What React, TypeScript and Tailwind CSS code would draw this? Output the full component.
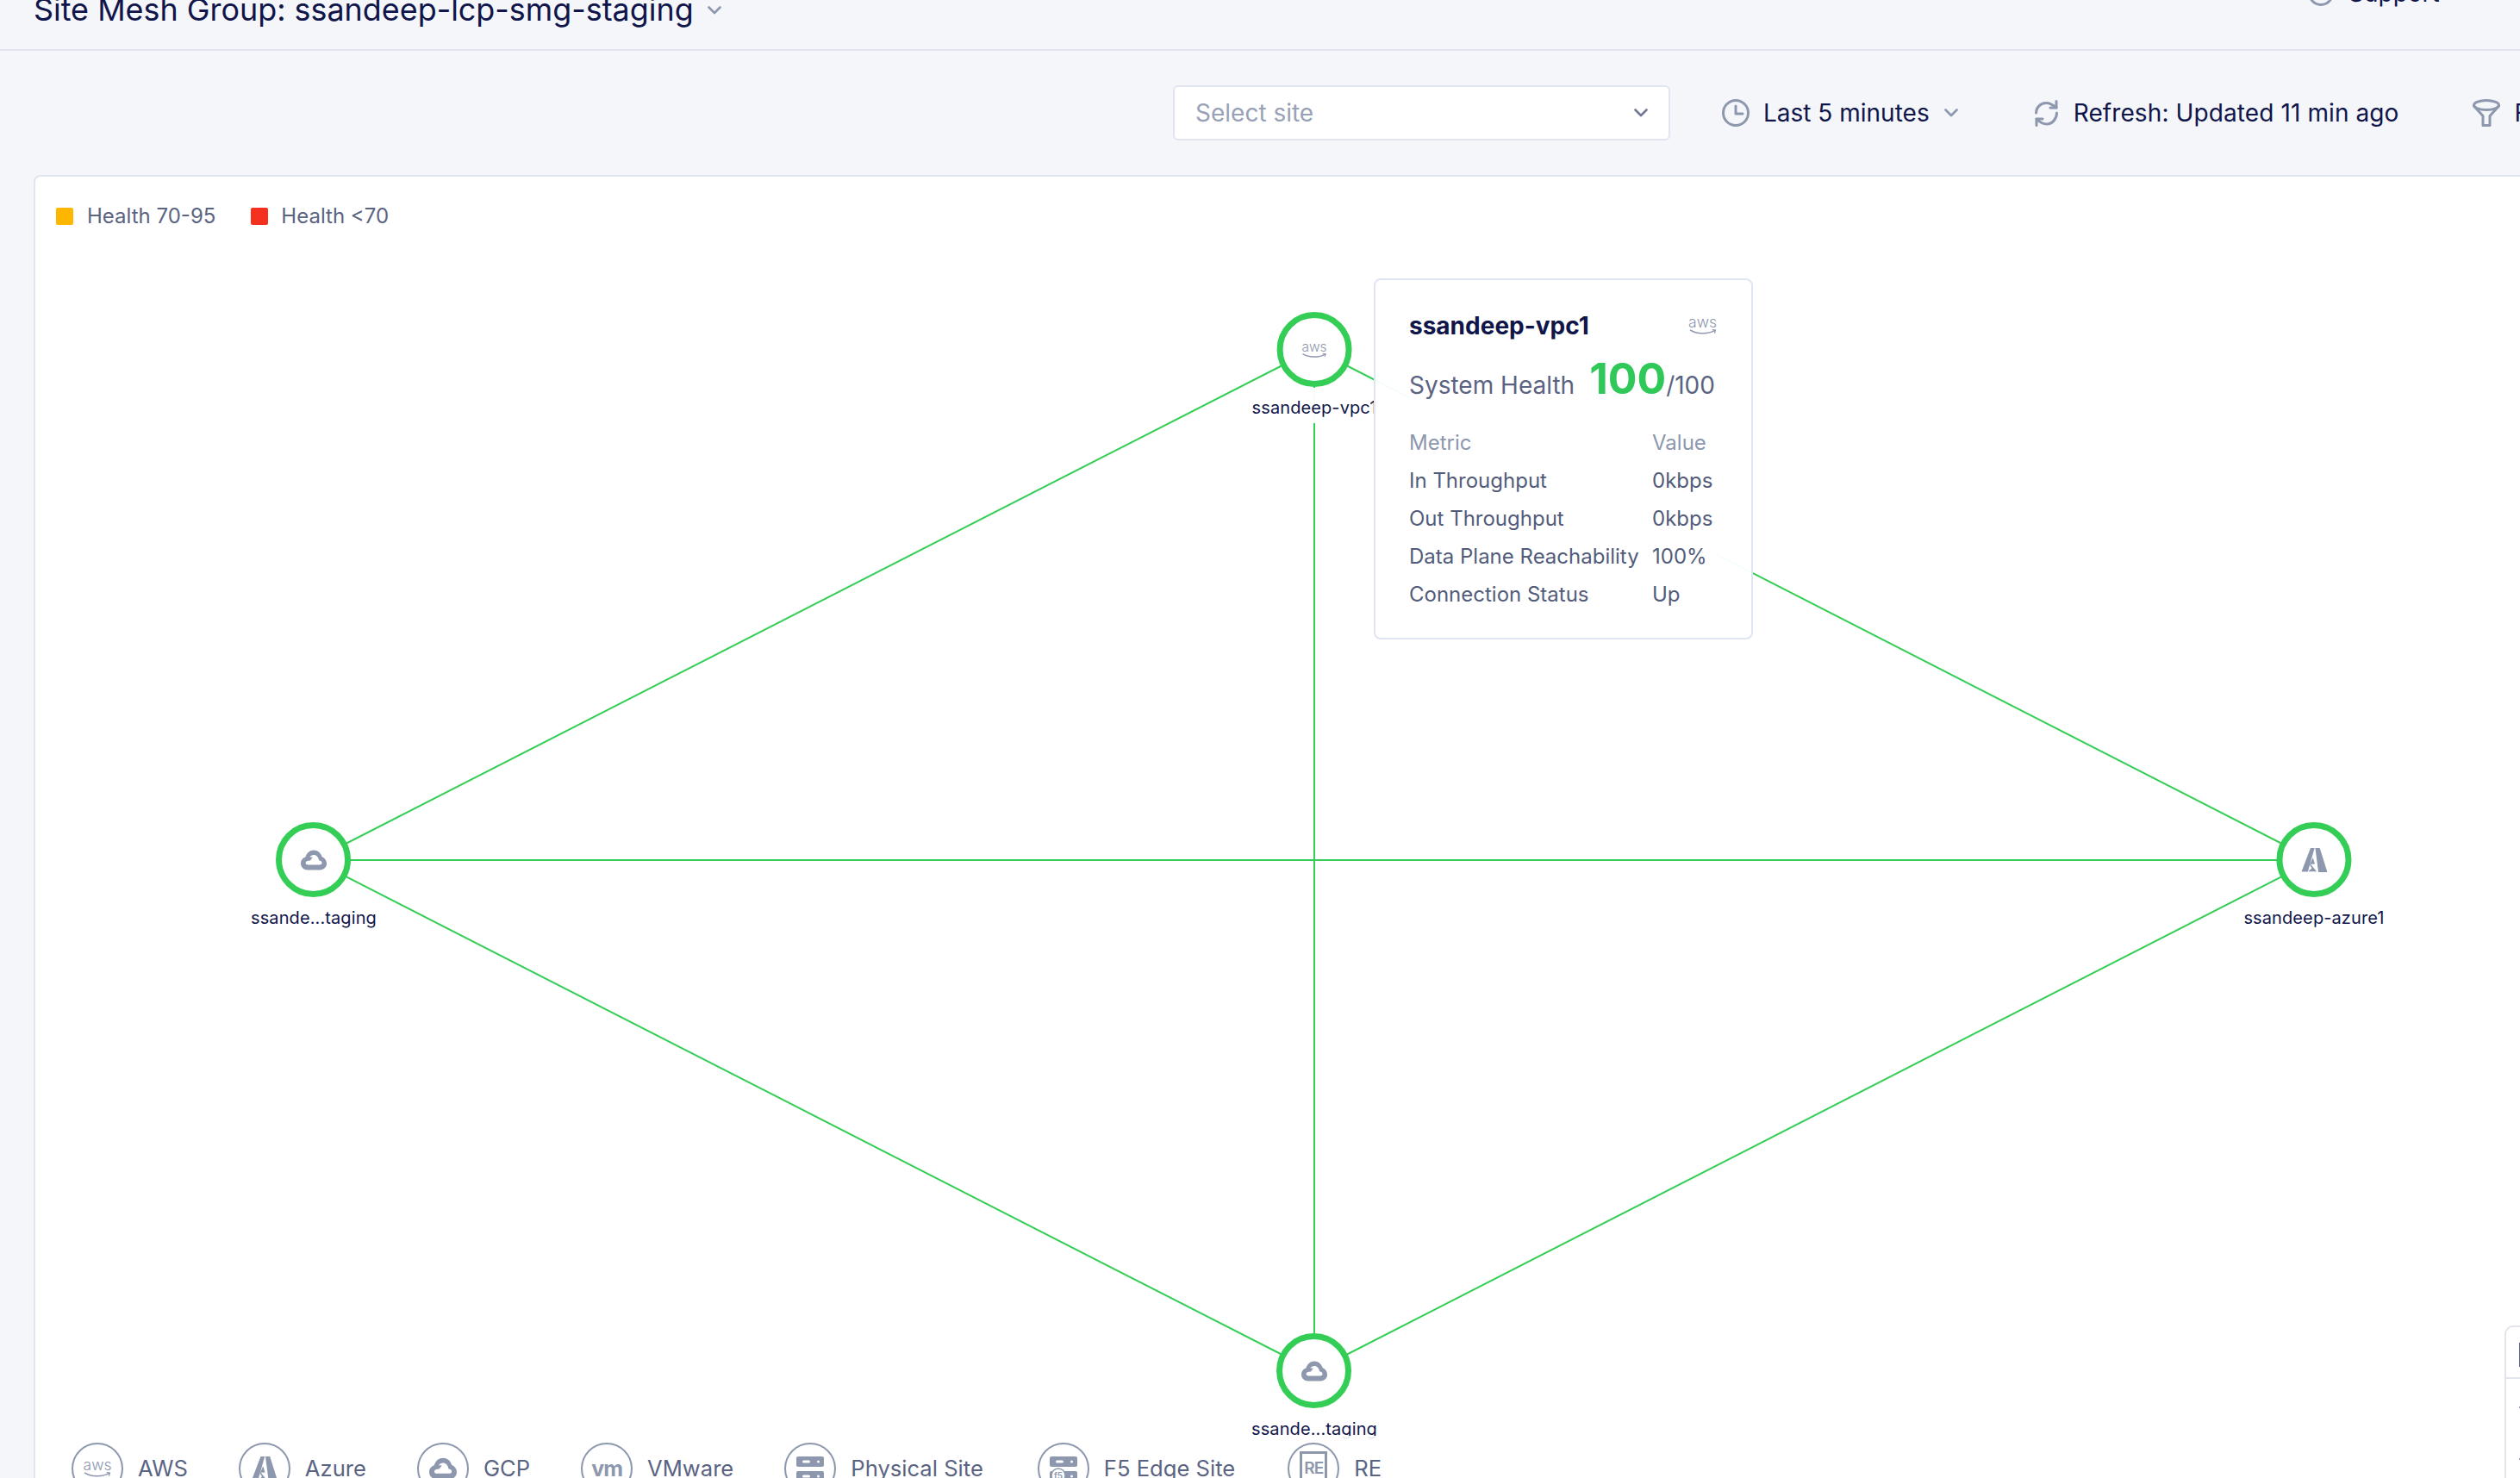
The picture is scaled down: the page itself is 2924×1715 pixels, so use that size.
function Chevron({ className }: { className: string }) {
  return (
    <svg viewBox="0 0 16 10" className={className} fill="none" stroke="currentColor" strokeWidth="2.6" strokeLinecap="round" strokeLinejoin="round">
      <path d="M1.5 1.5L8 8L14.5 1.5" />
    </svg>
  );
}

function ClockIcon() {
  return (
    <svg viewBox="0 0 32 32" className="w-[32px] h-[32px] shrink-0" fill="none" stroke="#8d97ad" strokeWidth="3" strokeLinecap="round" strokeLinejoin="round">
      <circle cx="16" cy="16" r="14.5" />
      <path d="M16 8V17H24" />
    </svg>
  );
}

function RefreshIcon() {
  return (
    <svg viewBox="0 0 27 31" className="w-[27px] h-[31px] shrink-0" fill="none" stroke="#8d97ad" strokeWidth="3" strokeLinecap="round" strokeLinejoin="round">
      <path d="M1.5 15C1.5 8.5 7 3.5 13 3.5C17.5 3.5 21 5.5 25 9" />
      <path d="M25 1.5V9H18" />
      <path d="M25.5 15C25.5 22 20 28 14 28C9.5 28 6 26 2 22" />
      <path d="M2 29.5V22H9" />
    </svg>
  );
}

function FunnelIcon() {
  return (
    <svg viewBox="0 0 32 32" className="w-[32px] h-[32px] shrink-0" fill="none" stroke="#8d97ad" strokeWidth="3" strokeLinecap="round" strokeLinejoin="round">
      <ellipse cx="16" cy="7" rx="14.5" ry="5.5" />
      <path d="M1.5 8L12 19.5V30.5H20V19.5L30.5 8" />
    </svg>
  );
}

function AwsIcon({ big }: { big?: boolean }) {
  return (
    <div className="flex flex-col items-center text-[#8d97ad]">
      <span className={big ? "text-[17.5px] leading-[14px] font-light" : "text-[15.5px] leading-[13px] font-light"}>aws</span>
      <svg viewBox="0 0 30 7" className={big ? "w-[32px] h-[8px]" : "w-[29px] h-[7px]"} fill="none" stroke="#8d97ad" strokeWidth="1.5">
        <path d="M1 1.5C8 6 20 6.5 28 2" />
        <path d="M25 1.2L28.5 1.6L27.6 5" strokeWidth="1.2" />
      </svg>
    </div>
  );
}

function CloudIcon({ className }: { className: string }) {
  return (
    <svg viewBox="0 0 30 24" className={className}>
      <path
        fill="#8d97ad"
        fillRule="evenodd"
        d="M8 23.5C3.4 23.5 0 20.2 0 16C0 12.4 2.2 9.6 5.4 8.6C6.8 3.6 10.6 0.5 15 0.5C19.4 0.5 23.2 3.4 24.6 8.2C27.8 9.4 30 12.4 30 16C30 20.2 26.6 23.5 22 23.5ZM8.5 17.5H21.5C23.4 17.5 24.5 16.5 24.5 15.2C24.5 13.6 23.2 12.6 21 12.2C20.4 8.4 18 6 15 6C13 6 11.4 7 10.4 8.6L13.8 8.8L11 12.4C7.6 12.4 5.6 13.4 5.6 15.2C5.6 16.5 6.7 17.5 8.5 17.5Z"
      />
    </svg>
  );
}

function AzureIcon({ className }: { className: string }) {
  return (
    <svg viewBox="0 0 30 28" className={className} fill="#8d97ad">
      <path d="M10.5 0H15.2L7.4 27.5H0Z" />
      <path d="M16 0H21.2L30 28H19.6Z" />
      <path d="M13.2 11.2L15.6 18.4L10.6 18.8L17.6 27.2H7.8L12 23.4L9.6 19.4Z" />
    </svg>
  );
}

function ServerIcon({ f5 }: { f5?: boolean }) {
  return (
    <svg viewBox="0 0 32 29" className="w-[32px] h-[29px]" fill="#8d97ad">
      <rect x="0" y="0" width="32" height="12" rx="2" />
      <rect x="0" y="17" width="32" height="12" rx="2" />
      <rect x="7" y="4.5" width="9" height="3" rx="1.5" fill="white" />
      <rect x="24" y="4.5" width="3" height="3" rx="1.5" fill="white" />
      <rect x="7" y="21.5" width="9" height="3" rx="1.5" fill="white" />
      <rect x="24" y="21.5" width="3" height="3" rx="1.5" fill="white" />
      {f5 && (
        <g>
          <circle cx="10" cy="22" r="8" fill="white" stroke="#8d97ad" strokeWidth="1.5" />
          <text x="10" y="25.5" textAnchor="middle" fontSize="10" fontWeight="600" fontFamily="Inter, sans-serif">
            f5
          </text>
        </g>
      )}
    </svg>
  );
}

const legendItems = [
  { label: "AWS", extra: "", icon: <AwsIcon big /> },
  { label: "Azure", extra: "", icon: <AzureIcon className="w-[30px] h-[36px]" /> },
  { label: "GCP", extra: "", icon: <CloudIcon className="w-[32px] h-[30px]" /> },
  { label: "VMware", extra: "", icon: <span className="text-[25px] leading-none font-bold tracking-[-1px] text-[#8d97ad]">vm</span> },
  { label: "Physical Site", extra: "", icon: <ServerIcon /> },
  { label: "F5 Edge Site", extra: "ml-[4px]", icon: <ServerIcon f5 /> },
  {
    label: "RE",
    extra: "ml-[2px]",
    icon: (
      <div className="w-[32px] h-[40px] border-[3px] border-[#8d97ad] flex items-center justify-center text-[19px] font-semibold tracking-[-1px] text-[#8d97ad]">
        RE
      </div>
    ),
  },
];

const nodes = [
  { pos: "left-[1484px] top-[157px]", label: "ssandeep-vpc1", icon: <AwsIcon /> },
  { pos: "left-[323px] top-[749px]", label: "ssande...taging", icon: <CloudIcon className="w-[30px] h-[24px]" /> },
  { pos: "left-[2644px] top-[749px]", label: "ssandeep-azure1", icon: <AzureIcon className="w-[30px] h-[28px]" /> },
  { pos: "left-[1484px] top-[1342px]", label: "ssande...taging", icon: <CloudIcon className="w-[30px] h-[24px]" /> },
];

const metrics = [
  ["In Throughput", "0kbps"],
  ["Out Throughput", "0kbps"],
  ["Data Plane Reachability", "100%"],
  ["Connection Status", "Up"],
];

export default function App() {
  return (
    <div className="w-[2924px] h-[1715px] overflow-hidden flex flex-col bg-[#f4f6fa] font-[family-name:Inter,sans-serif] text-[#10154a]">
      <div className="h-[59px] shrink-0 border-b-2 border-[#e0e5f0] flex justify-between pl-[39px] pr-[94px]">
        <div className="flex items-start -mt-[11px]">
          <span className="text-[35.9px] leading-[44px]">Site Mesh Group: ssandeep-lcp-smg-staging</span>
          <Chevron className="w-[16px] h-[10px] text-[#8d97ad] mt-[18px] ml-[16px]" />
        </div>
        <div className="flex items-start -mt-[25px] gap-[17px] w-[152px]">
          <div className="w-[30px] h-[30px] mt-[2px] shrink-0 rounded-full border-[3px] border-[#8d97ad]" />
          <span className="text-[28px] leading-[34px]">Support</span>
        </div>
      </div>

      <div className="h-[144px] shrink-0 flex items-center pl-[1361px] whitespace-nowrap">
        <div className="w-[577px] h-[64px] shrink-0 bg-white border-2 border-[#e0e5f0] rounded-[6px] flex items-center justify-between pl-[24px] pr-[24px]">
          <span className="text-[28px] text-[#98a1b6]">Select site</span>
          <Chevron className="w-[16px] h-[10px] text-[#6f7a96]" />
        </div>
        <div className="ml-[60px]">
          <ClockIcon />
        </div>
        <span className="text-[28px] ml-[16px]">Last 5 minutes</span>
        <Chevron className="w-[16px] h-[10px] ml-[17px] shrink-0 text-[#8d97ad]" />
        <div className="ml-[89px]">
          <RefreshIcon />
        </div>
        <span className="text-[28px] ml-[18px] tracking-[0.1px]">Refresh: Updated 11 min ago</span>
        <div className="ml-[85px]">
          <FunnelIcon />
        </div>
        <span className="text-[28px] ml-[17px]">Filters</span>
      </div>

      <div className="flex-1 ml-[39px] relative bg-white border-t-2 border-l-2 border-[#e0e5f0] rounded-tl-[8px]">
        <div className="flex items-center pt-[35px] pl-[24px] text-[24px] text-[#5a6482]">
          <div className="w-[20px] h-[20px] rounded-[2px] bg-[#ffb600]" />
          <span className="ml-[16px] leading-[22px]">Health 70-95</span>
          <div className="w-[20px] h-[20px] rounded-[2px] bg-[#f5301f] ml-[41px]" />
          <span className="ml-[15px] leading-[22px]">Health &lt;70</span>
        </div>

        <svg className="absolute left-[1px] top-0 w-[2882px] h-[1510px]" viewBox="0 0 2882 1510" fill="none" stroke="#34ce57" strokeWidth="2">
          <path d="M1483 200L322 793" />
          <path d="M1483 200L2643 793" />
          <path d="M322 793H2643" />
          <path d="M1483 200V1386" />
          <path d="M322 793L1483 1386" />
          <path d="M2643 793L1483 1386" />
        </svg>

        {nodes.map((node) => (
          <div key={node.pos} className={`absolute ${node.pos} -translate-x-1/2 flex flex-col items-center`}>
            <div className="w-[87px] h-[87px] rounded-full border-[7px] border-[#34ce57] bg-white flex items-center justify-center">
              {node.icon}
            </div>
            <div className="mt-[1px] pt-[11px] w-fit px-[1px] h-[41px] whitespace-nowrap text-center text-[20px] leading-[24px] tracking-[0.1px] bg-white/95">
              {node.label}
            </div>
          </div>
        ))}

        <div className="absolute left-[1553px] top-[118px] w-[440px] h-[419px] bg-white/95 border-2 border-[#e0e5f4] rounded-[8px] pt-[37px] pr-[40px] pl-[39px] whitespace-nowrap">
          <div className="bg-white h-[340px]">
            <div className="flex items-center justify-between h-[32px]">
              <span className="text-[28px] leading-[34px] font-bold">ssandeep-vpc1</span>
              <AwsIcon big />
            </div>
            <div className="flex items-baseline mt-[17px] text-[28px] text-[#5a6482]">
              <span>System Health</span>
              <span className="text-[50px] leading-[56px] font-bold text-[#30c858] ml-[17px]">100</span>
              <span>/100</span>
            </div>
            <div className="mt-[24px] grid grid-cols-[282px_1fr] auto-rows-[44px] items-center text-[24px] text-[#525c7a]">
              <span className="text-[#8d97ad]">Metric</span>
              <span className="text-[#8d97ad]">Value</span>
              {metrics.map(([name, value]) => [<span key={name}>{name}</span>, <span key={value + name}>{value}</span>])}
            </div>
          </div>
        </div>

        <div className="absolute left-0 top-[1461px] pt-[8px] pl-[42px] pr-[20px] flex gap-[59px] bg-white/90 text-[25.6px] text-[#5a6482]">
          {legendItems.map((item) => (
            <div key={item.label} className={`flex items-center gap-[17px] whitespace-nowrap ${item.extra}`}>
              <div className="w-[60px] h-[60px] rounded-full border-2 border-[#8d97ad] flex items-center justify-center shrink-0">{item.icon}</div>
              <span>{item.label}</span>
            </div>
          ))}
        </div>

        <div className="absolute left-[2865px] top-[1333px] w-[60px] h-[200px] bg-white border-2 border-[#e3e5ec] rounded-tl-[10px]">
          <div className="h-[60px] border-b-2 border-[#e3e5ec] pl-[15px] pt-[18px]">
            <div className="w-[2px] h-[28px] bg-[#5a6482]" />
          </div>
          <div className="pl-[15px] pt-[32px] flex flex-col gap-[58px]">
            <div className="w-[2px] h-[2px] bg-[#8d97ad]" />
            <div className="w-[2px] h-[2px] bg-[#8d97ad]" />
          </div>
        </div>
      </div>
    </div>
  );
}
